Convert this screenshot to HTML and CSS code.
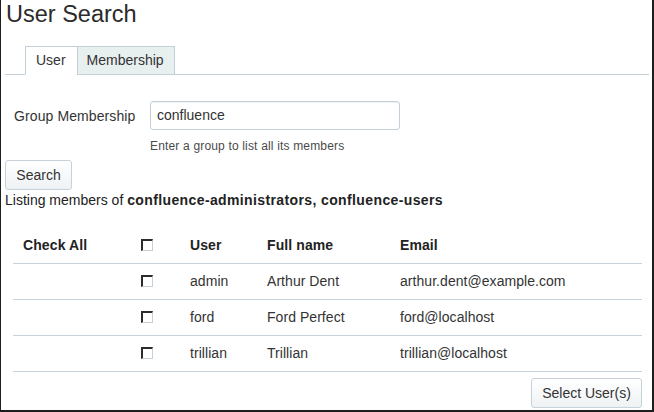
FILE: index.html
```html
<!DOCTYPE html>
<html>
<head>
<meta charset="utf-8">
<link rel="stylesheet" href="styles.css">
</head>
<body>
<div class="page">
  <h1 class="title">User Search</h1>
  <div class="tabs">
    <div class="tab active">User</div>
    <div class="tab">Membership</div>
  </div>
  <div class="field">
    <label class="label">Group Membership</label>
    <div class="input">confluence</div>
  </div>
  <div class="help">Enter a group to list all its members</div>
  <div class="btn search">Search</div>
  <div class="listing">Listing members of <b>confluence-administrators, confluence-users</b></div>
  <table class="results">
    <colgroup>
      <col class="c1"><col class="c2"><col class="c3"><col class="c4"><col class="c5">
    </colgroup>
    <thead>
      <tr><th>Check All</th><th><span class="cb"></span></th><th>User</th><th>Full name</th><th>Email</th></tr>
    </thead>
    <tbody>
      <tr><td></td><td><span class="cb"></span></td><td>admin</td><td>Arthur Dent</td><td>arthur.dent@example.com</td></tr>
      <tr><td></td><td><span class="cb"></span></td><td>ford</td><td>Ford Perfect</td><td>ford@localhost</td></tr>
      <tr><td></td><td><span class="cb"></span></td><td>trillian</td><td>Trillian</td><td>trillian@localhost</td></tr>
    </tbody>
  </table>
  <div class="actions"><div class="btn select">Select User(s)</div></div>
</div>
</body>
</html>
```
FILE: styles.css
```css
html, body {
  margin: 0;
  padding: 0;
  background: #ffffff;
}
body {
  width: 654px;
  height: 412px;
  box-sizing: border-box;
  border-left: 1px solid #1e1e1e;
  border-right: 2px solid #1e1e1e;
  border-bottom: 2px solid #1e1e1e;
  font-family: "Liberation Sans", Arial, sans-serif;
  font-size: 14px;
  color: #333333;
  overflow: hidden;
}
.page {
  padding: 0 3px 0 4px;
}
.title {
  margin: 0;
  padding: 1px 0 0 1px;
  font-size: 23.5px;
  line-height: 27px;
  font-weight: normal;
  color: #2b2b2b;
}
.tabs {
  display: flex;
  margin-top: 18px;
  padding-left: 20px;
  border-bottom: 1px solid #c3d0d9;
}
.tab {
  margin-bottom: -1px;
  padding: 5px 10px 5px 9px;
  line-height: 17px;
  font-size: 14px;
  border: 1px solid #c3d0d9;
  background: #e8efef;
  color: #333333;
}
.tab.active {
  background: #ffffff;
  border-bottom-color: #ffffff;
  border-right: none;
  padding: 5px 11px 5px 10px;
}
.field {
  display: flex;
  align-items: center;
  margin-top: 26px;
}
.label {
  width: 145px;
  padding-left: 9px;
  box-sizing: border-box;
  line-height: 18px;
  letter-spacing: 0.1px;
}
.input {
  width: 250px;
  height: 29px;
  box-sizing: border-box;
  border: 1px solid #c2cfd8;
  border-radius: 3px;
  padding: 0 6px;
  line-height: 27px;
  color: #333333;
  box-shadow: inset 0 1px 1px #eef2f5;
}
.help {
  margin-top: 8px;
  padding-left: 145px;
  font-size: 12px;
  line-height: 16px;
  letter-spacing: 0.17px;
  color: #4a4a4a;
}
.btn {
  display: inline-block;
  box-sizing: border-box;
  height: 30px;
  line-height: 28px;
  border: 1px solid #c6d2da;
  border-radius: 3px;
  background: linear-gradient(#ffffff, #eef2f4);
  color: #333333;
  text-align: center;
}
.search {
  display: block;
  width: 67px;
  margin-top: 6px;
}
.listing {
  margin-top: 1px;
  line-height: 18px;
  color: #222222;
}
.listing b {
  color: #222222;
  letter-spacing: 0.38px;
}
.results {
  margin: 19px 7px 0 8px;
  width: calc(100% - 15px);
  border-collapse: collapse;
  table-layout: fixed;
}
.c1 { width: 118px; }
.c2 { width: 49px; }
.c3 { width: 77px; }
.c4 { width: 133px; }
.results th,
.results td {
  padding: 8px 10px 9px 10px;
  line-height: 18px;
  text-align: left;
  border-bottom: 1px solid #c8d2da;
  white-space: nowrap;
}
.results th {
  font-weight: bold;
  color: #222222;
  font-size: 14px;
  letter-spacing: 0.1px;
}
.results td {
  color: #333333;
  letter-spacing: 0.05px;
}
.cb {
  display: inline-block;
  width: 12px;
  height: 12px;
  box-sizing: border-box;
  border-top: 2px solid #2c2c2c;
  border-left: 2px solid #2c2c2c;
  border-right: 1px solid #c6ced6;
  border-bottom: 1px solid #c6ced6;
  background: #ffffff;
  vertical-align: -1px;
}
.actions {
  display: flex;
  justify-content: flex-end;
  margin-top: 6px;
  padding-right: 7px;
}
.select {
  width: 111px;
}
```
